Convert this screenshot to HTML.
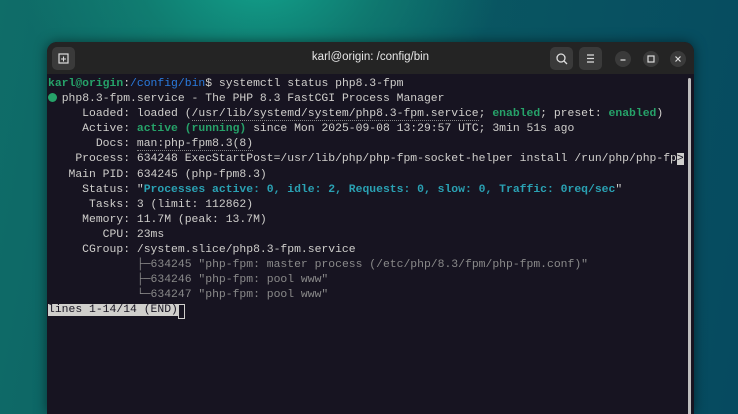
<!DOCTYPE html>
<html><head><meta charset="utf-8"><style>
html,body{margin:0;padding:0;width:738px;height:414px;overflow:hidden}
body{background:
 radial-gradient(ellipse 300px 200px at 260px -20px,#12a08a 0%,rgba(18,140,120,0.6) 40%,rgba(0,0,0,0) 80%),
 linear-gradient(100deg,#0f6d68 0%,#0a5a62 45%,#064a60 100%);position:relative;font-family:"Liberation Sans",sans-serif}
.win{position:absolute;left:47px;top:42px;width:647px;height:372px;background:#171421;border-radius:10px 10px 0 0;overflow:hidden;box-shadow:0 0 12px rgba(0,0,0,.5)}
.hd{height:32px;background:#242424;position:relative}
.title{position:absolute;left:0;right:0;top:9px;text-align:center;color:#e8e8e8;font-size:11.5px}
.btn{position:absolute;top:5px;width:23px;height:23px;border-radius:5px;background:#3a3a3a}
.cb{position:absolute;top:9px;width:16px;height:16px;border-radius:50%;background:#3a3a3a}
.term{position:absolute;left:1px;top:35px;font-family:"Liberation Mono",monospace;font-size:11.4px;line-height:15.1px;color:#d0cfcc;white-space:pre}
.g{color:#26a269;font-weight:bold}.b{color:#2a7bde}.c{color:#2aa1b3;font-weight:bold}.d{color:#8a8a8a}
.u{border-bottom:1px dotted #888}
.sb{position:absolute;left:641px;top:36px;width:3px;height:340px;background:#bdbdbd;border-radius:2px}
.dot{display:inline-block;width:9px;height:9px;border-radius:50%;background:#26a269;margin-right:4.7px;vertical-align:-1px}
.cur{position:absolute;left:131px;top:262px;width:5px;height:13px;border:1px solid #d0cfcc}
</style></head><body>
<div class="win">
 <div class="hd">
  <div class="btn" style="left:5px"><svg width="23" height="23"><rect x="7" y="7" width="9" height="9" fill="none" stroke="#ddd" stroke-width="1.2"/><path d="M11.5 9.5v5M9 12h5" stroke="#ddd"/></svg></div>
  <div class="title">karl@origin: /config/bin</div>
  <div class="btn" style="left:503px"><svg width="23" height="23"><circle cx="11" cy="11" r="4" fill="none" stroke="#ddd" stroke-width="1.3"/><path d="M14 14l3 3" stroke="#ddd" stroke-width="1.3"/></svg></div>
  <div class="btn" style="left:532px"><svg width="23" height="23"><path d="M8 8h7M8 11.5h7M8 15h7" stroke="#ddd" stroke-width="1.2"/></svg></div>
  <div class="cb" style="left:568px"><svg width="16" height="16"><path d="M5.5 9h5" stroke="#ddd" stroke-width="1.2"/></svg></div>
  <div class="cb" style="left:596px"><svg width="16" height="16"><rect x="5" y="5" width="6" height="6" fill="none" stroke="#ddd" stroke-width="1.2"/></svg></div>
  <div class="cb" style="left:623px"><svg width="16" height="16"><path d="M5.5 5.5l5 5M10.5 5.5l-5 5" stroke="#ddd" stroke-width="1.2"/></svg></div>
 </div>
 <div class="term"><span class="g">karl@origin</span>:<span class="b">/config/bin</span>$ systemctl status php8.3-fpm
<span class="dot"></span>php8.3-fpm.service - The PHP 8.3 FastCGI Process Manager
     Loaded: loaded (<span class="u">/usr/lib/systemd/system/php8.3-fpm.service</span>; <span class="g">enabled</span>; preset: <span class="g">enabled</span>)
     Active: <span class="g">active (running)</span> since Mon 2025-09-08 13:29:57 UTC; 3min 51s ago
       Docs: <span class="u">man:php-fpm8.3(8)</span>
    Process: 634248 ExecStartPost=/usr/lib/php/php-fpm-socket-helper install /run/php/php-fp<span style="background:#d0cfcc;color:#171421">&gt;</span>
   Main PID: 634245 (php-fpm8.3)
     Status: "<span class="c">Processes active: 0, idle: 2, Requests: 0, slow: 0, Traffic: 0req/sec</span>"
      Tasks: 3 (limit: 112862)
     Memory: 11.7M (peak: 13.7M)
        CPU: 23ms
     CGroup: /system.slice/php8.3-fpm.service
             <span class="d">├─634245 "php-fpm: master process (/etc/php/8.3/fpm/php-fpm.conf)"</span>
             <span class="d">├─634246 "php-fpm: pool www"</span>
             <span class="d">└─634247 "php-fpm: pool www"</span>
<span style="background:#d0cfcc;color:#171421">lines 1-14/14 (END)</span></div>
 <div class="cur"></div>
 <div class="sb"></div>
</div>
</body></html>
